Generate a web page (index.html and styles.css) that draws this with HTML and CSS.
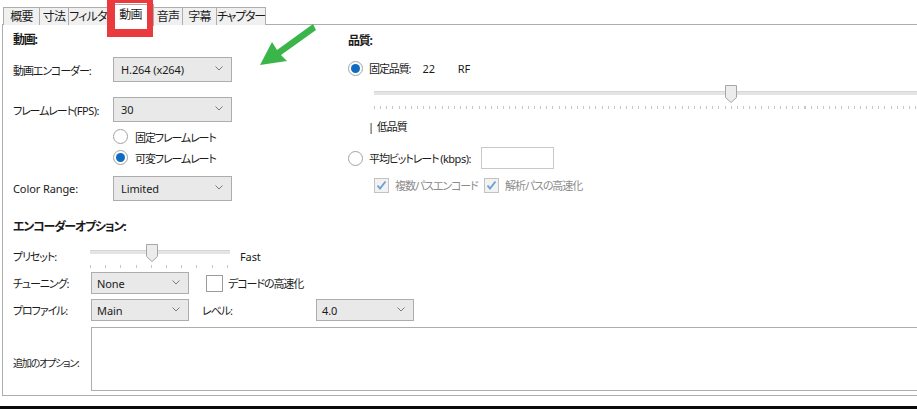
FILE: index.html
```html
<!DOCTYPE html>
<html lang="ja">
<head>
<meta charset="utf-8">
<title>動画</title>
<link rel="stylesheet" href="styles.css">
</head>
<body>
<div class="window">
  <div class="tabs">
    <div class="tab t1">概要</div>
    <div class="tab t2">寸法</div>
    <div class="tab t3">フィルタ</div>
    <div class="tab t4 active">動画</div>
    <div class="tab t5">音声</div>
    <div class="tab t6">字幕</div>
    <div class="tab t7">チャプター</div>
  </div>

  <div class="panel">
    <div class="top">
      <section class="video">
        <h3 class="title">動画:</h3>
        <div class="row r-encoder">
          <span class="label">動画エンコーダー:</span>
          <div class="select wide"><span class="en">H.264 (x264)</span><svg class="chev" width="8" height="5" viewBox="0 0 8 5"><polyline points="0.5,0.5 4,4 7.5,0.5" fill="none" stroke="#7a7a7a" stroke-width="1"/></svg></div>
        </div>
        <div class="row r-fps">
          <span class="label">フレームレート<span class="en-tight">(FPS)</span>:</span>
          <div class="select wide"><span class="en">30</span><svg class="chev" width="8" height="5" viewBox="0 0 8 5"><polyline points="0.5,0.5 4,4 7.5,0.5" fill="none" stroke="#7a7a7a" stroke-width="1"/></svg></div>
        </div>
        <div class="radios">
          <label class="radio"><span class="dot"></span>固定フレームレート</label>
          <label class="radio"><span class="dot on"></span>可変フレームレート</label>
        </div>
        <div class="row r-range">
          <span class="label en">Color Range:</span>
          <div class="select wide"><span class="en">Limited</span><svg class="chev" width="8" height="5" viewBox="0 0 8 5"><polyline points="0.5,0.5 4,4 7.5,0.5" fill="none" stroke="#7a7a7a" stroke-width="1"/></svg></div>
        </div>
      </section>

      <section class="quality">
        <h3 class="title">品質:</h3>
        <div class="q-row">
          <span class="dot on"></span>
          <span class="q-label">固定品質:</span>
          <span class="q-value en">22</span>
          <span class="q-unit en">RF</span>
        </div>
        <div class="slider q-slider">
          <div class="track"></div>
          <svg class="thumb" width="12" height="18" viewBox="0 0 12 18"><path d="M0.5 0.5 H11.5 V12.5 L6 17.5 L0.5 12.5 Z" fill="#ececec" stroke="#a6a6a6"/></svg>
          <div class="ticks"></div>
        </div>
        <div class="low"><span class="pipe">|</span>低品質</div>
        <div class="avg-row">
          <span class="dot"></span>
          <span class="avg-label">平均ビットレート <span class="en-tight">(kbps)</span>:</span>
          <div class="input"></div>
        </div>
        <div class="checks">
          <span class="check disabled first"><svg width="15" height="15" viewBox="0 0 15 15"><rect x="0.5" y="0.5" width="14" height="14" fill="#f2f2f2" stroke="#c2c2c2"/><polyline points="3.5,7.5 6,10.5 11.5,3.5" fill="none" stroke="#6a9fd3" stroke-width="1.8"/></svg>複数パスエンコード</span>
          <span class="check disabled"><svg width="15" height="15" viewBox="0 0 15 15"><rect x="0.5" y="0.5" width="14" height="14" fill="#f2f2f2" stroke="#c2c2c2"/><polyline points="3.5,7.5 6,10.5 11.5,3.5" fill="none" stroke="#6a9fd3" stroke-width="1.8"/></svg>解析パスの高速化</span>
        </div>
      </section>
    </div>

    <section class="encoder">
      <h3 class="title">エンコーダーオプション:</h3>
      <div class="e-row e-preset">
        <span class="e-label">プリセット:</span>
        <div class="slider p-slider">
          <div class="track"></div>
          <svg class="thumb" width="12" height="18" viewBox="0 0 12 18"><path d="M0.5 0.5 H11.5 V12.5 L6 17.5 L0.5 12.5 Z" fill="#ececec" stroke="#a6a6a6"/></svg>
          <div class="ticks"></div>
        </div>
        <span class="fast en">Fast</span>
      </div>
      <div class="e-row e-tune">
        <span class="e-label">チューニング:</span>
        <div class="select narrow"><span class="en">None</span><svg class="chev" width="8" height="5" viewBox="0 0 8 5"><polyline points="0.5,0.5 4,4 7.5,0.5" fill="none" stroke="#7a7a7a" stroke-width="1"/></svg></div>
        <span class="check decode"><span class="box"></span>デコードの高速化</span>
      </div>
      <div class="e-row e-profile">
        <span class="e-label">プロファイル:</span>
        <div class="select narrow"><span class="en">Main</span><svg class="chev" width="8" height="5" viewBox="0 0 8 5"><polyline points="0.5,0.5 4,4 7.5,0.5" fill="none" stroke="#7a7a7a" stroke-width="1"/></svg></div>
        <span class="level-label">レベル:</span>
        <div class="select narrow"><span class="en">4.0</span><svg class="chev" width="8" height="5" viewBox="0 0 8 5"><polyline points="0.5,0.5 4,4 7.5,0.5" fill="none" stroke="#7a7a7a" stroke-width="1"/></svg></div>
      </div>
      <div class="e-row e-extra">
        <span class="e-label extra-label">追加のオプション:</span>
        <div class="textarea"></div>
      </div>
    </section>
  </div>

  <div class="bar"></div>

  <div class="mark"></div>
  <svg class="arrow" width="70" height="52" viewBox="0 0 70 52">
    <polygon points="57,3 21,29 16,21 4,44 31,40 25,34 60,9" fill="#3ab54a"/>
  </svg>
</div>
</body>
</html>
```

FILE: styles.css
```css
* { box-sizing: border-box; }

html, body {
  margin: 0;
  padding: 0;
  background: #ffffff;
}

body {
  width: 917px;
  height: 409px;
  overflow: hidden;
  font-family: "Noto Sans", "Noto Sans CJK JP", sans-serif;
  font-size: 11px;
  letter-spacing: -1.1px;
  color: #1b1b1b;
  font-feature-settings: "palt" 1;
}

.en { letter-spacing: -0.1px; }
.en-tight { letter-spacing: -0.5px; }

.window {
  position: relative;
  width: 917px;
  height: 409px;
}

/* tab strip */
.tabs {
  display: flex;
  align-items: flex-end;
  height: 25px;
  padding: 0 0 0 3px;
}

.tab {
  height: 18px;
  line-height: 17px;
  border: 1px solid #adadad;
  border-bottom: none;
  background: #f0f0f0;
  margin-right: -1px;
  text-align: center;
  white-space: nowrap;
  font-size: 12px;
  letter-spacing: -0.8px;
}

.t1 { width: 37px; }
.t2 { width: 30px; }
.t3 { width: 40px; }
.t4 { width: 47px; }
.t5 { width: 30px; }
.t6 { width: 35px; }
.t7 { width: 50px; letter-spacing: -1.2px; }

.tab.active {
  background: #ffffff;
  height: 22px;
  line-height: 20px;
  position: relative;
  z-index: 1;
  margin-bottom: -1px;
}

/* content panel */
.panel {
  margin-left: 2px;
  width: 1000px;
  height: 372px;
  margin-top: -1px;
  border: 1px solid #adadad;
  border-right: none;
}

.title {
  margin: 0;
  font-size: 12px;
  font-weight: bold;
  line-height: 16px;
  letter-spacing: -1.2px;
}

.top {
  display: flex;
  height: 178px;
}

/* left column: video settings */
.video {
  flex: none;
  width: 344px;
  padding-left: 10px;
}

.video .title { margin-top: 7px; }

.row {
  display: flex;
  align-items: center;
}

.label {
  width: 100px;
  white-space: nowrap;
}

.r-encoder { margin-top: 9px; }
.r-fps { margin-top: 15px; }
.r-range { margin-top: 8px; }

.select {
  display: flex;
  align-items: center;
  justify-content: space-between;
  height: 25px;
  border: 1px solid #adadad;
  background: #e9e9e9;
  padding: 0 8px 0 7px;
}

.select.wide { width: 119px; }
.select.narrow { width: 98px; height: 22px; padding-left: 5px; }

.chev { flex: none; margin-bottom: 2px; }

.radios {
  margin-top: 4px;
  padding-left: 100px;
  display: flex;
  flex-direction: column;
}

.radio {
  display: flex;
  align-items: center;
  height: 21px;
  gap: 7px;
}

.dot {
  display: inline-flex;
  align-items: center;
  justify-content: center;
  flex: none;
  width: 15px;
  height: 15px;
  border-radius: 50%;
  border: 1px solid #a3a3a3;
  background: #ffffff;
}

.dot.on::after {
  content: "";
  width: 9px;
  height: 9px;
  border-radius: 50%;
  background: #0f6cc2;
}

/* right column: quality */
.quality {
  flex: none;
  width: 650px;
  padding-left: 1px;
}

.quality .title { margin-top: 8px; }

.q-row {
  display: flex;
  align-items: center;
  height: 20px;
  margin-top: 9px;
}

.q-label { margin-left: 6px; }
.q-value { margin-left: 12px; }
.q-unit { margin-left: 23px; }

.slider {
  position: relative;
  height: 28px;
}

.track {
  position: absolute;
  left: 0;
  right: 0;
  top: 9px;
  height: 4px;
  background: #e4e4e4;
  border-top: 1px solid #d6d6d6;
}

.thumb {
  position: absolute;
  top: 3px;
}

.ticks {
  position: absolute;
  left: 0;
  right: 0;
  top: 24px;
  height: 3px;
}

.q-slider {
  margin-left: 26px;
  width: 640px;
  margin-top: 4px;
}

.q-slider .ticks {
  background: repeating-linear-gradient(to right, #c6c6c6 0 1px, transparent 1px 6.15px);
}

.q-slider .thumb { left: 351px; }

.low {
  margin-left: 20px;
  line-height: 16px;
  margin-top: 9px;
}

.pipe { margin-right: 4px; }

.avg-row {
  display: flex;
  align-items: center;
  height: 22px;
  margin-top: 12px;
}

.avg-label {
  width: 112px;
  margin-left: 6px;
  white-space: nowrap;
}

.input {
  width: 73px;
  height: 22px;
  border: 1px solid #c8c8c8;
  background: #ffffff;
}

.checks {
  display: flex;
  align-items: center;
  height: 16px;
  margin-top: 8px;
  padding-left: 26px;
}

.check {
  display: inline-flex;
  align-items: center;
  gap: 6px;
  white-space: nowrap;
}

.check.disabled { color: #8c8c8c; }
.check.first { width: 110px; }

/* encoder options */
.encoder { padding-left: 10px; }

.encoder .title { margin-top: 16px; }

.e-row {
  display: flex;
  align-items: center;
}

.e-label {
  width: 78px;
  white-space: nowrap;
}

.e-preset {
  height: 27px;
  margin-top: 6px;
}

.e-preset .e-label { margin-top: 3px; }

.p-slider {
  width: 140px;
  margin-left: -1px;
}

.p-slider .ticks {
  background: repeating-linear-gradient(to right, #c6c6c6 0 1px, transparent 1px 15.2px);
}

.p-slider .thumb { left: 56px; }

.fast {
  margin-left: 10px;
  margin-top: 3px;
}

.e-tune {
  height: 22px;
  margin-top: 4px;
}

.decode {
  margin-left: 17px;
  gap: 5px;
}

.box {
  width: 17px;
  height: 17px;
  border: 1px solid #9c9c9c;
  background: #ffffff;
}

.e-profile {
  height: 22px;
  margin-top: 5px;
}

.level-label {
  margin-left: 13px;
  width: 114px;
}

.e-extra {
  height: 64px;
  margin-top: 6px;
}

.extra-label {
  font-size: 10px;
  letter-spacing: -1.2px;
  margin-top: 6px;
}

.textarea {
  width: 900px;
  height: 64px;
  border: 1px solid #adadad;
  background: #ffffff;
}

/* bottom edge */
.bar {
  margin-top: 10px;
  height: 4px;
  background: #0a0a0a;
}

/* highlight frame around the current tab */
.mark {
  position: absolute;
  left: 107px;
  top: 0;
  width: 46px;
  height: 37px;
  border: solid #ea3a3e;
  border-width: 3px 6px 8px 8px;
  z-index: 2;
}

.arrow {
  position: absolute;
  left: 256px;
  top: 21px;
  z-index: 2;
}
```
